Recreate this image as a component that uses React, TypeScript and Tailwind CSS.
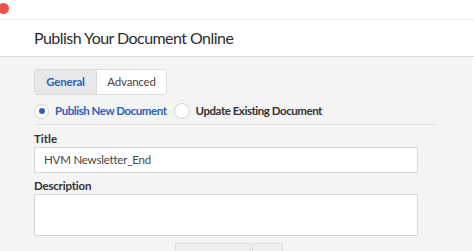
import React from "react";

export default function App() {
  return (
    <div
      className="w-[474px] h-[251px] overflow-hidden bg-white text-[#323232] flex flex-col"
      style={{ fontFamily: 'Lato, "Liberation Sans", sans-serif' }}
    >
      {/* window strip */}
      <div className="relative h-[20px] shrink-0 border-b border-[#e8e8e8] bg-white">
        <span className="absolute left-[-2px] top-[3px] w-[11px] h-[11px] rounded-full bg-[#f0524a]" />
      </div>

      {/* header */}
      <header className="h-[37px] shrink-0 flex items-center pl-[34px] border-b border-[#dcdcdc] bg-white">
        <h1 className="text-[16px] tracking-[-0.55px] text-[#2c2c2c]">Publish Your Document Online</h1>
      </header>

      {/* body */}
      <section className="flex-1 w-[472px] bg-[#f4f4f4] pl-[34px] pt-[12px]">
        <div className="flex w-[133px] h-[26px] border border-[#dadada] rounded-[3px] overflow-hidden text-[11.5px] tracking-[-0.2px]">
          <button className="w-[62px] bg-[#e8e8e8] border-r border-[#dadada] font-bold text-[#2d62b8]">
            General
          </button>
          <button className="flex-1 bg-white text-[#444]">Advanced</button>
        </div>

        <div className="flex items-center h-[22px] mt-[5px] text-[11.5px] tracking-[-0.45px] font-bold w-[403px] border-b border-[#e2e2e2] pb-[2px] box-content">
          <span className="w-[15px] h-[15px] rounded-full bg-white border border-[#d4d4d4] flex items-center justify-center">
            <span className="w-[6px] h-[6px] rounded-full bg-[#2d62b8]" />
          </span>
          <span className="ml-[6px] text-[#2d62b8]">Publish New Document</span>
          <span className="ml-[7px] w-[16px] h-[16px] rounded-full bg-white border border-[#d4d4d4]" />
          <span className="ml-[6px] text-[#333]">Update Existing Document</span>
        </div>

        <div className="mt-[7px] text-[11.5px] font-bold leading-[14px]">Title</div>
        <div className="mt-[1px] w-[384px] h-[26px] bg-white border border-[#d8d8d8] flex items-center pl-[9px] text-[11.5px] tracking-[-0.2px] text-[#444]">
          HVM Newsletter_End
        </div>

        <div className="mt-[6px] text-[11.5px] tracking-[-0.2px] font-bold leading-[14px]">Description</div>
        <div className="mt-[1px] w-[384px] h-[42px] bg-white border border-[#d8d8d8]" />

        <div className="flex ml-[141px] mt-[7px]">
          <div className="w-[76px] h-[12px] bg-[#efefef] border border-[#dcdcdc] rounded-t-[2px]" />
          <div className="w-[31px] h-[12px] ml-[1px] bg-[#efefef] border border-[#dcdcdc] rounded-t-[2px]" />
        </div>
      </section>
    </div>
  );
}
